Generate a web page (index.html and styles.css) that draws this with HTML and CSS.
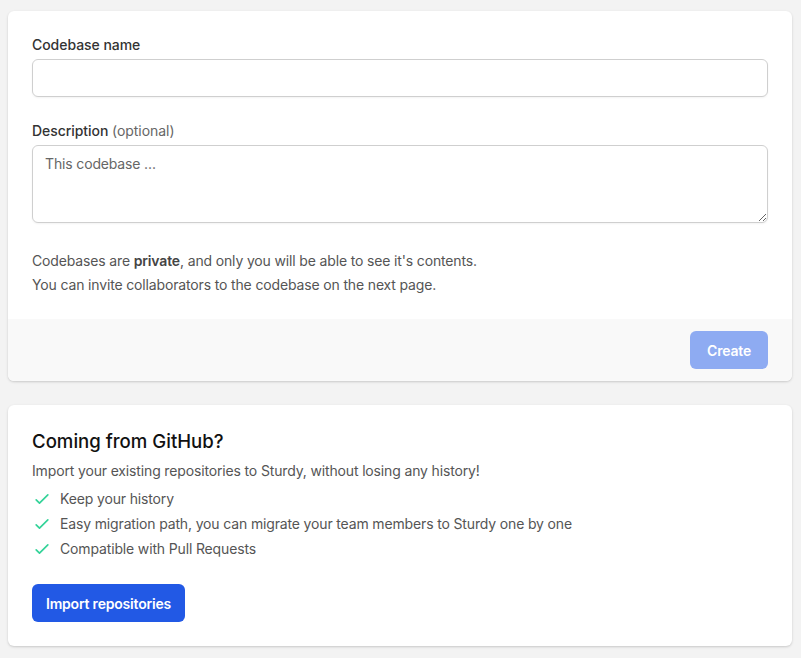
FILE: index.html
```html
<!DOCTYPE html>
<html>
<head>
<meta charset="utf-8">
<link rel="stylesheet" href="styles.css">
</head>
<body>
<div class="page">
  <form class="card">
    <div class="card-body">
      <div class="field">
        <label class="label">Codebase name</label>
        <input class="input" type="text">
      </div>
      <div class="field">
        <label class="label">Description <span class="optional">(optional)</span></label>
        <textarea class="textarea" rows="3" placeholder="This codebase ..."></textarea>
      </div>
      <div class="note">
        <p>Codebases are <strong>private</strong>, and only you will be able to see it's contents.</p>
        <p>You can invite collaborators to the codebase on the next page.</p>
      </div>
    </div>
    <div class="card-footer">
      <button type="button" class="btn btn-disabled">Create</button>
    </div>
  </form>

  <div class="card">
    <div class="card-body github">
      <h3 class="title">Coming from GitHub?</h3>
      <p class="lead">Import your existing repositories to Sturdy, without losing any history!</p>
      <ul class="list">
        <li><svg class="check" viewBox="0 0 24 24" fill="none" stroke="currentColor" stroke-width="2" stroke-linecap="round" stroke-linejoin="round"><path d="M5 13l4 4L19 7"/></svg><span>Keep your history</span></li>
        <li><svg class="check" viewBox="0 0 24 24" fill="none" stroke="currentColor" stroke-width="2" stroke-linecap="round" stroke-linejoin="round"><path d="M5 13l4 4L19 7"/></svg><span>Easy migration path, you can migrate your team members to Sturdy one by one</span></li>
        <li><svg class="check" viewBox="0 0 24 24" fill="none" stroke="currentColor" stroke-width="2" stroke-linecap="round" stroke-linejoin="round"><path d="M5 13l4 4L19 7"/></svg><span>Compatible with Pull Requests</span></li>
      </ul>
      <button type="button" class="btn btn-primary">Import repositories</button>
    </div>
  </div>
</div>
</body>
</html>
```

FILE: styles.css
```css
* { box-sizing: border-box; }
html, body { margin: 0; padding: 0; }
body {
  background: #f3f3f3;
  font-family: Inter, "Noto Sans", sans-serif;
  font-size: 14px;
  line-height: 20px;
  letter-spacing: -0.15px;
  color: #333;
}
.page {
  padding: 11px 9px 12px 8px;
  display: flex;
  flex-direction: column;
  gap: 24px;
}
.card {
  background: #fff;
  border-radius: 6px;
  box-shadow: 0 1px 3px rgba(0,0,0,0.12), 0 1px 2px rgba(0,0,0,0.06);
  overflow: hidden;
  margin: 0;
}
.card-body {
  padding: 24px 24px 22px;
}
.field { margin-bottom: 24px; }
.label {
  display: block;
  font-weight: 500;
  color: #333;
  margin-bottom: 4px;
  letter-spacing: -0.05px;
}
.optional { font-weight: 400; color: #666; }
.input, .textarea {
  display: block;
  width: 100%;
  border: 1px solid #cfcfcf;
  border-radius: 6px;
  font-family: inherit;
  font-size: 14px;
  line-height: 20px;
  letter-spacing: -0.15px;
  padding: 8px 12px;
  color: #333;
  background: #fff;
  box-shadow: 0 1px 2px rgba(0,0,0,0.05);
}
.input { height: 38px; }
.textarea { height: 78px; resize: vertical; }
.textarea::placeholder { color: #666; }
.note { margin-top: 26px; color: #555; }
.note p { margin: 0; line-height: 24px; }
.note strong { font-weight: 600; color: #444; }
.card-footer {
  background: #f9f9f9;
  padding: 12px 24px;
  display: flex;
  justify-content: flex-end;
}
.btn {
  height: 38px;
  border: 0;
  border-radius: 6px;
  font-family: inherit;
  font-size: 14px;
  font-weight: 600;
  letter-spacing: -0.2px;
  color: #fff;
  cursor: pointer;
}
.btn-disabled { background: #8eabf2; padding: 0 17px; }
.btn-primary { background: #2259e5; padding: 0 14px; }
.github { padding-bottom: 24px; }
.title {
  margin: 0;
  font-size: 18.6px;
  line-height: 24px;
  font-weight: 500;
  letter-spacing: 0;
  color: #111;
}
.lead { margin: 8px 0 0; color: #555; }
.list {
  list-style: none;
  margin: 5px 0 0;
  padding: 0;
  color: #555;
}
.list li {
  display: flex;
  align-items: center;
  gap: 8px;
  height: 25px;
}
.check { width: 20px; height: 20px; color: #34d399; flex: none; }
.github .btn { margin-top: 23px; }
```
